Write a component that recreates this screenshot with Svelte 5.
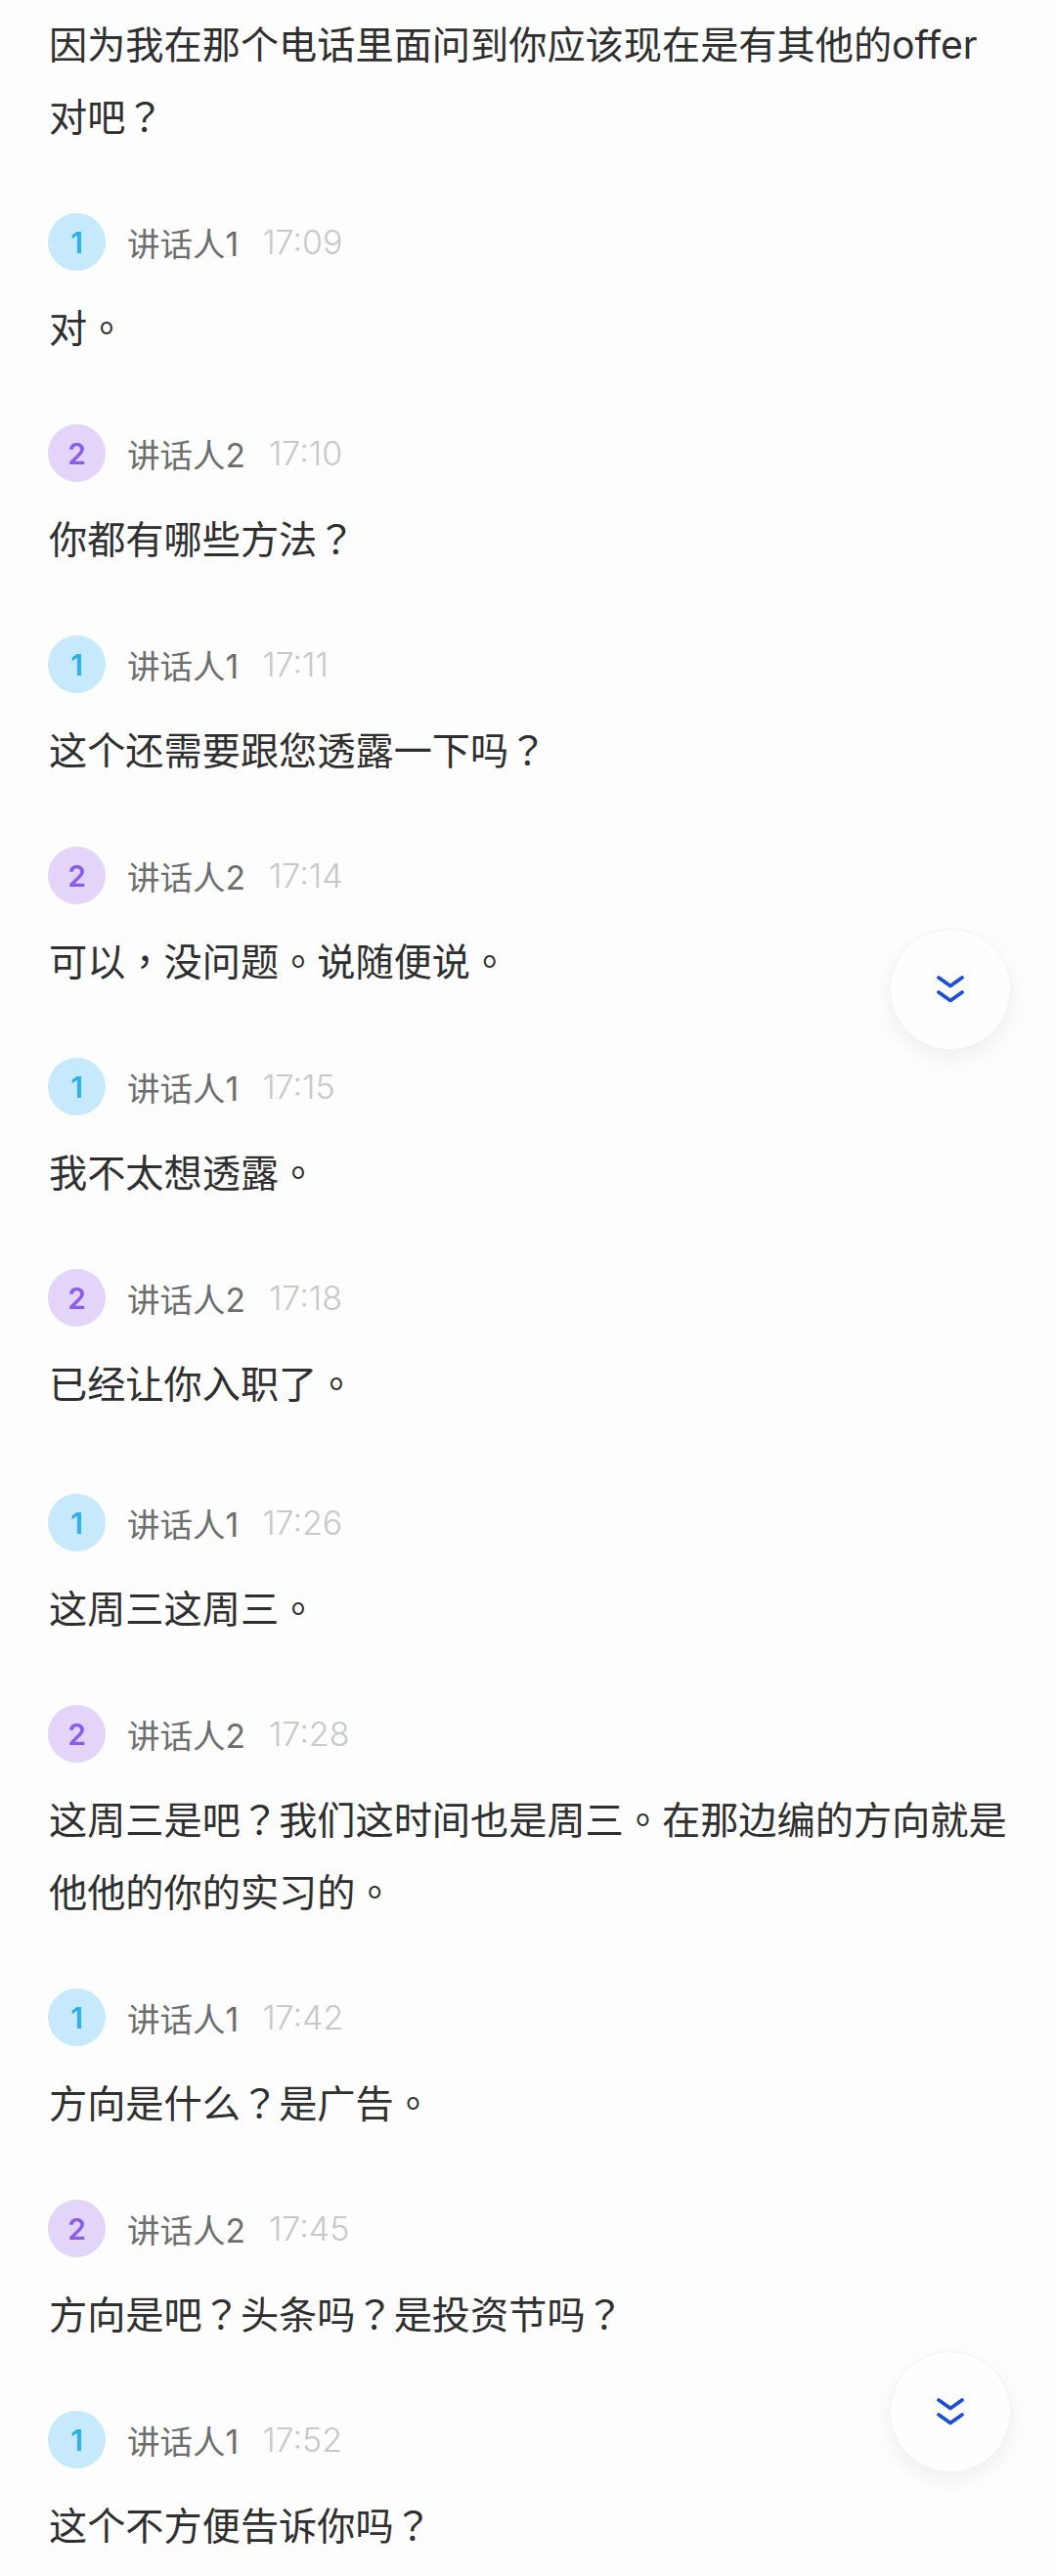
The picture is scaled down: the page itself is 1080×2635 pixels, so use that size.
<script>
  const lead = "因为我在那个电话里面问到你应该现在是有其他的offer对吧？";

  const messages = [
    { who: 1, time: "17:09", text: "对。" },
    { who: 2, time: "17:10", text: "你都有哪些方法？" },
    { who: 1, time: "17:11", text: "这个还需要跟您透露一下吗？" },
    { who: 2, time: "17:14", text: "可以，没问题。说随便说。" },
    { who: 1, time: "17:15", text: "我不太想透露。" },
    { who: 2, time: "17:18", text: "已经让你入职了。", gap: true },
    { who: 1, time: "17:26", text: "这周三这周三。" },
    { who: 2, time: "17:28", text: "这周三是吧？我们这时间也是周三。在那边编的方向就是他他的你的实习的。" },
    { who: 1, time: "17:42", text: "方向是什么？是广告。" },
    { who: 2, time: "17:45", text: "方向是吧？头条吗？是投资节吗？" },
    { who: 1, time: "17:52", text: "这个不方便告诉你吗？" }
  ];

  // the punctuation sits centred in its cell, which is how the TC face draws it
  const split = (text) => text.split(/([？。，])/).filter(Boolean);
  const isPunct = (part) => /^[？。，]$/.test(part);
</script>

<main class="page">
  <p class="text">{#each split(lead) as part}{#if isPunct(part)}<span class="punct">{part}</span>{:else}{part}{/if}{/each}</p>

  {#each messages as m}
    <section class="msg" class:gap={m.gap}>
      <div class="head">
        <span class="avatar s{m.who}">{m.who}</span>
        <span class="name">讲话人{m.who}</span>
        <span class="time">{m.time}</span>
      </div>
      <p class="text">{#each split(m.text) as part}{#if isPunct(part)}<span class="punct">{part}</span>{:else}{part}{/if}{/each}</p>
    </section>
  {/each}

  <button class="jump one" aria-label="回到底部">
    <svg width="32" height="32" viewBox="0 0 32 32" fill="none" stroke="#1a50d8" stroke-width="3.8" stroke-linecap="round" stroke-linejoin="round">
      <path d="M4 4 L16 12.5 L28 4" />
      <path d="M4 19 L16 27.5 L28 19" />
    </svg>
  </button>
  <button class="jump two" aria-label="回到底部">
    <svg width="32" height="32" viewBox="0 0 32 32" fill="none" stroke="#1a50d8" stroke-width="3.8" stroke-linecap="round" stroke-linejoin="round">
      <path d="M4 4 L16 12.5 L28 4" />
      <path d="M4 19 L16 27.5 L28 19" />
    </svg>
  </button>
</main>

<style>
  :global(body) {
    margin: 0;
    background: #fdfdfd;
  }

  .page {
    position: relative;
    width: 1080px;
    height: 2635px;
    overflow: hidden;
    box-sizing: border-box;
    padding: 9px 45px 0 50px;
    font-family: Inter, "Noto Sans CJK SC", sans-serif;
  }

  .text {
    margin: 0;
    font-size: 39.2px;
    line-height: 74px;
    color: #2f2f2f;
  }

  .punct {
    font-family: "Noto Sans CJK TC", sans-serif;
    line-height: 0;
  }

  .msg {
    margin-top: 61px;
  }

  .msg.gap {
    margin-bottom: 75px;
  }

  .head {
    display: flex;
    align-items: center;
    height: 59px;
    margin-bottom: 22px;
  }

  .avatar {
    flex: none;
    width: 59px;
    height: 59px;
    margin-left: -1px;
    margin-right: 22px;
    border-radius: 50%;
    display: flex;
    align-items: center;
    justify-content: center;
    font-size: 30px;
    font-weight: 600;
  }

  .s1 {
    background: #c6e9fb;
    color: #2aaef0;
  }

  .s2 {
    background: #e2d5f9;
    color: #8a5cea;
  }

  .name {
    font-size: 33.5px;
    color: #6e6e6e;
    margin-right: 24px;
  }

  .time {
    font-size: 34px;
    font-weight: 300;
    color: #c8c8c8;
  }

  .jump {
    position: absolute;
    left: 910px;
    width: 124px;
    height: 124px;
    padding: 0;
    border: 1px solid #f3f3f3;
    border-radius: 50%;
    background: #fefefe;
    box-shadow: 0 8px 20px rgba(0, 0, 0, 0.06);
    display: flex;
    align-items: center;
    justify-content: center;
  }

  .one {
    top: 950px;
  }

  .two {
    top: 2405px;
  }
</style>
